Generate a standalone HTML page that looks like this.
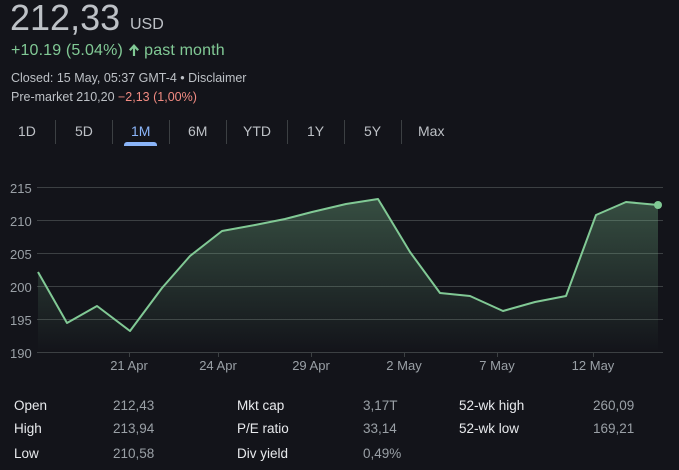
<!DOCTYPE html>
<html><head><style>
body{margin:0;width:679px;height:470px;background:#13141a;font-family:"Liberation Sans",sans-serif;position:relative;overflow:hidden;color:#bdc1c6}
.a{position:absolute;white-space:nowrap}
.big{font-size:36px;color:#bdc1c6;left:10px;top:-3px}
.usd{font-size:16px;left:130px;top:16px}
.chg{font-size:16px;color:#81c995;left:11px;top:42px;letter-spacing:0.15px}
.sm{font-size:12.5px;color:#bdc1c6}
.tab{font-size:14px;top:123px;color:#bdc1c6}
.sep{position:absolute;top:120px;width:1px;height:24px;background:#3c4043}
.t{font-size:13.5px;color:#e8eaed}
.v{font-size:13.5px;color:#9aa0a6}
</style></head><body>
<div class="a big">212,33</div>
<div class="a usd">USD</div>
<div class="a chg">+10.19 (5.04%) <svg width="12" height="13" viewBox="0 0 12 13" style="vertical-align:-1px"><path d="M6,1 L1,6.5 L2.6,8 L4.9,5.5 L4.9,13 L7.1,13 L7.1,5.5 L9.4,8 L11,6.5Z" fill="#81c995"/></svg> past month</div>
<div class="a sm" style="left:11px;top:71px">Closed: 15 May, 05:37 GMT-4 • Disclaimer</div>
<div class="a sm" style="left:11px;top:90px">Pre-market 210,20 <span style="color:#f28b82">−2,13 (1,00%)</span></div>
<div class="a tab" style="left:18px">1D</div>
<div class="sep" style="left:55px"></div>
<div class="a tab" style="left:75px">5D</div>
<div class="sep" style="left:112px"></div>
<div class="a tab" style="left:131px;color:#8ab4f8">1M</div>
<div style="position:absolute;left:124px;top:142px;width:33px;height:4px;background:#8ab4f8;border-radius:3px 3px 0 0"></div>
<div class="sep" style="left:169px"></div>
<div class="a tab" style="left:188px">6M</div>
<div class="sep" style="left:226px"></div>
<div class="a tab" style="left:243px">YTD</div>
<div class="sep" style="left:287px"></div>
<div class="a tab" style="left:307px">1Y</div>
<div class="sep" style="left:344px"></div>
<div class="a tab" style="left:364px">5Y</div>
<div class="sep" style="left:401px"></div>
<div class="a tab" style="left:418px">Max</div>

<svg style="position:absolute;left:0;top:0" width="679" height="470">
<defs><linearGradient id="g" x1="0" y1="0" x2="0" y2="1"><stop offset="0" stop-color="#81c995" stop-opacity="0.32"/><stop offset="1" stop-color="#81c995" stop-opacity="0"/></linearGradient></defs>
<g stroke="#3c4043" stroke-width="1">
<line x1="37" x2="663" y1="187.5" y2="187.5"/><line x1="37" x2="663" y1="220.5" y2="220.5"/><line x1="37" x2="663" y1="253.5" y2="253.5"/><line x1="37" x2="663" y1="286.5" y2="286.5"/><line x1="37" x2="663" y1="319.5" y2="319.5"/><line x1="37" x2="663" y1="352.5" y2="352.5"/>
<line x1="129.5" x2="129.5" y1="352" y2="357"/><line x1="218.5" x2="218.5" y1="352" y2="357"/><line x1="311.5" x2="311.5" y1="352" y2="357"/><line x1="404.5" x2="404.5" y1="352" y2="357"/><line x1="497.5" x2="497.5" y1="352" y2="357"/><line x1="593.5" x2="593.5" y1="352" y2="357"/>
</g>
<path d="M38,272 L67,323 97,306 130,331 162,288 190,256 222,231 255,225 285,219 312,212 346,204 378,199 410,252 440,293 470,296 503,311 535,302 566,296 596,215 626,202 658,205 L658,352 L38,352Z" fill="url(#g)"/>
<path d="M38,272 L67,323 97,306 130,331 162,288 190,256 222,231 255,225 285,219 312,212 346,204 378,199 410,252 440,293 470,296 503,311 535,302 566,296 596,215 626,202 658,205" fill="none" stroke="#81c995" stroke-width="2" stroke-linejoin="round"/>
<circle cx="658" cy="205" r="4" fill="#81c995"/>
<g font-family="Liberation Sans" font-size="13" fill="#9aa0a6">
<text x="10" y="193">215</text><text x="10" y="226">210</text><text x="10" y="259">205</text><text x="10" y="292">200</text><text x="10" y="325">195</text><text x="10" y="358">190</text>
<g text-anchor="middle"><text x="129" y="370">21 Apr</text><text x="218" y="370">24 Apr</text><text x="311" y="370">29 Apr</text><text x="404" y="370">2 May</text><text x="497" y="370">7 May</text><text x="593" y="370">12 May</text></g>
</g>
</svg>

<div class="a t" style="left:14px;top:398px">Open</div><div class="a v" style="left:113px;top:398px">212,43</div>
<div class="a t" style="left:14px;top:421px">High</div><div class="a v" style="left:113px;top:421px">213,94</div>
<div class="a t" style="left:14px;top:446px">Low</div><div class="a v" style="left:113px;top:446px">210,58</div>
<div class="a t" style="left:237px;top:398px">Mkt cap</div><div class="a v" style="left:363px;top:398px">3,17T</div>
<div class="a t" style="left:237px;top:421px">P/E ratio</div><div class="a v" style="left:363px;top:421px">33,14</div>
<div class="a t" style="left:237px;top:446px">Div yield</div><div class="a v" style="left:363px;top:446px">0,49%</div>
<div class="a t" style="left:459px;top:398px">52-wk high</div><div class="a v" style="left:593px;top:398px">260,09</div>
<div class="a t" style="left:459px;top:421px">52-wk low</div><div class="a v" style="left:593px;top:421px">169,21</div>
</body></html>
